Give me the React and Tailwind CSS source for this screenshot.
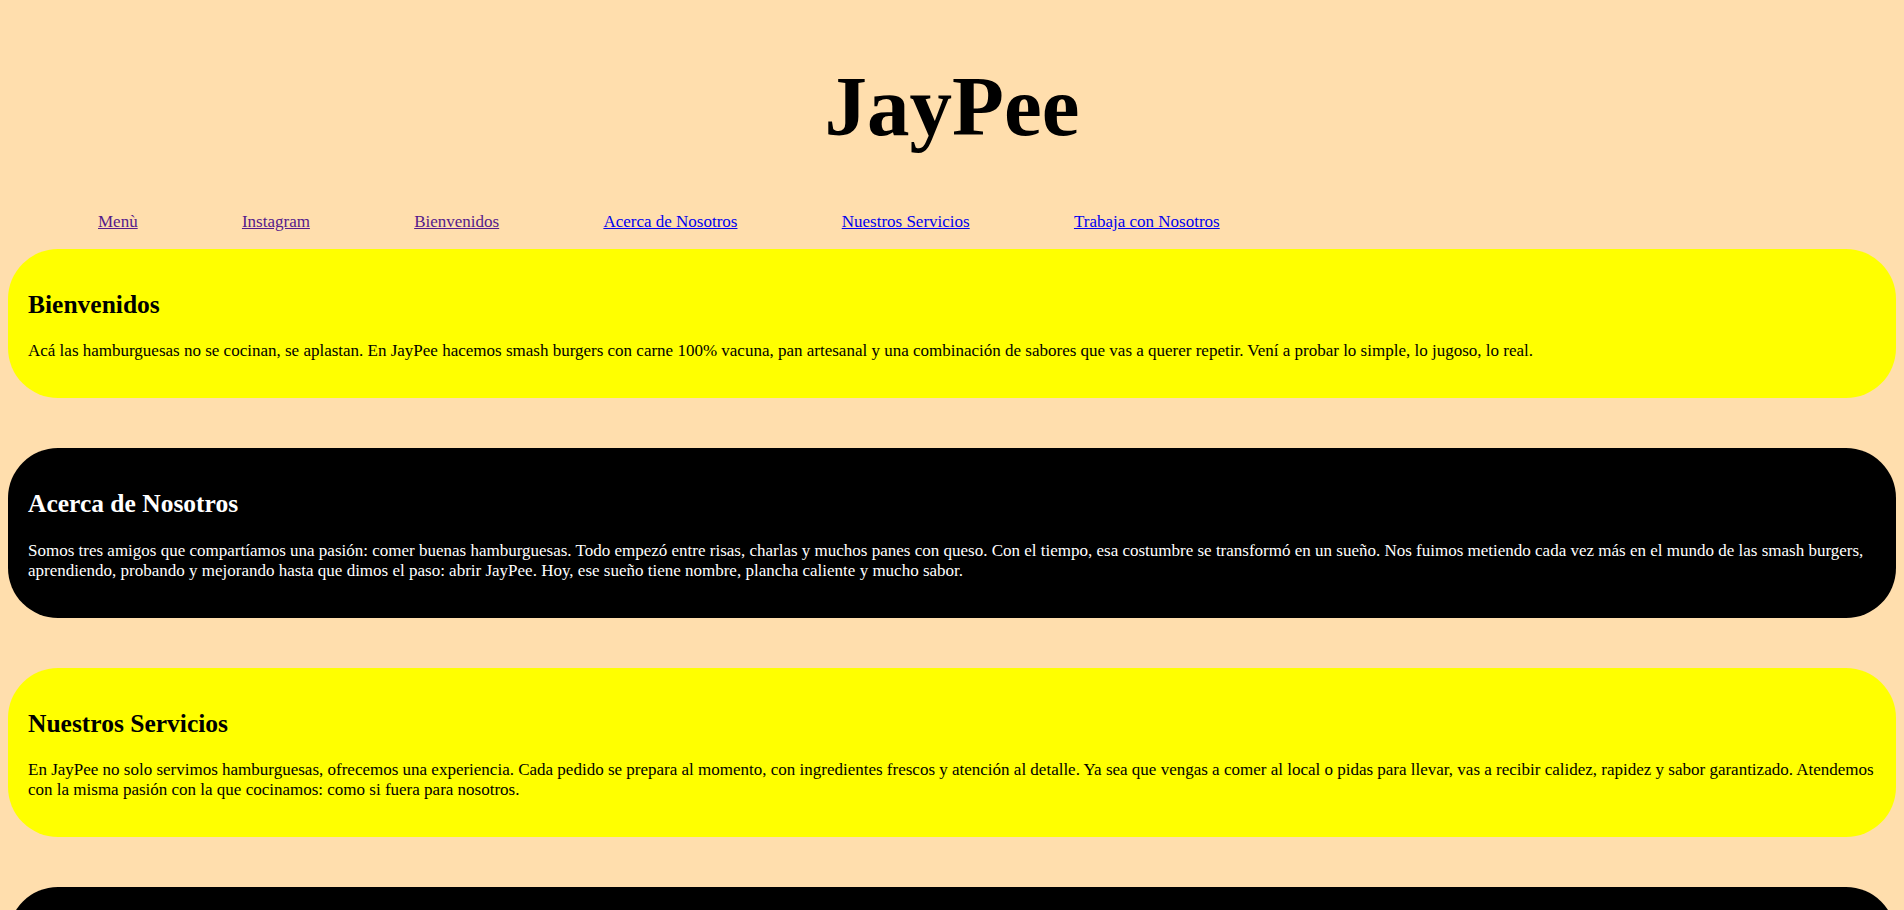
const links = [
  { label: 'Menù', href: '#menu', visited: true },
  { label: 'Instagram', href: '#instagram', visited: true },
  { label: 'Bienvenidos', href: '#bienvenidos', visited: true },
  { label: 'Acerca de Nosotros', href: '#acerca' },
  { label: 'Nuestros Servicios', href: '#servicios' },
  { label: 'Trabaja con Nosotros', href: '#trabaja' },
]

const sections = [
  {
    id: 'bienvenidos',
    dark: false,
    title: 'Bienvenidos',
    text: 'Acá las hamburguesas no se cocinan, se aplastan. En JayPee hacemos smash burgers con carne 100% vacuna, pan artesanal y una combinación de sabores que vas a querer repetir. Vení a probar lo simple, lo jugoso, lo real.',
  },
  {
    id: 'acerca',
    dark: true,
    title: 'Acerca de Nosotros',
    text: 'Somos tres amigos que compartíamos una pasión: comer buenas hamburguesas. Todo empezó entre risas, charlas y muchos panes con queso. Con el tiempo, esa costumbre se transformó en un sueño. Nos fuimos metiendo cada vez más en el mundo de las smash burgers, aprendiendo, probando y mejorando hasta que dimos el paso: abrir JayPee. Hoy, ese sueño tiene nombre, plancha caliente y mucho sabor.',
  },
  {
    id: 'servicios',
    dark: false,
    title: 'Nuestros Servicios',
    text: 'En JayPee no solo servimos hamburguesas, ofrecemos una experiencia. Cada pedido se prepara al momento, con ingredientes frescos y atención al detalle. Ya sea que vengas a comer al local o pidas para llevar, vas a recibir calidez, rapidez y sabor garantizado. Atendemos con la misma pasión con la que cocinamos: como si fuera para nosotros.',
  },
  {
    id: 'trabaja',
    dark: true,
    title: 'Trabaja con Nosotros',
    text: '¿Te gustan las hamburguesas tanto como a nosotros? Mandanos tu CV y sumate al equipo de JayPee.',
  },
]

function Section({ id, dark, title, text }) {
  return (
    <section
      id={id}
      className={
        dark
          ? 'mb-[50px] rounded-[50px] bg-black p-5 text-white'
          : 'mb-[50px] rounded-[50px] bg-[#ffff00] p-5 text-black'
      }
    >
      <h2 className="my-[21.17px] text-[25.5px] font-bold">{title}</h2>
      <p className="my-[17px]">{text}</p>
    </section>
  )
}

export default function App() {
  return (
    <div className="min-h-screen bg-[#ffdead] px-2 pt-[57px] pb-2 text-[17px] leading-[normal] text-black font-['Liberation_Serif','Times_New_Roman',serif]">
      <h1 className="mb-[57px] text-center text-[85px] font-bold">JayPee</h1>

      <nav>
        <ul className="mb-[17px] flex gap-[104.25px] pl-[90px]">
          {links.map((l) => (
            <li key={l.label}>
              <a
                href={l.href}
                className={l.visited ? 'text-[#551a8b] underline' : 'text-[#0000ee] underline'}
              >
                {l.label}
              </a>
            </li>
          ))}
        </ul>
      </nav>

      <main>
        {sections.map((s) => (
          <Section key={s.id} {...s} />
        ))}
      </main>
    </div>
  )
}
